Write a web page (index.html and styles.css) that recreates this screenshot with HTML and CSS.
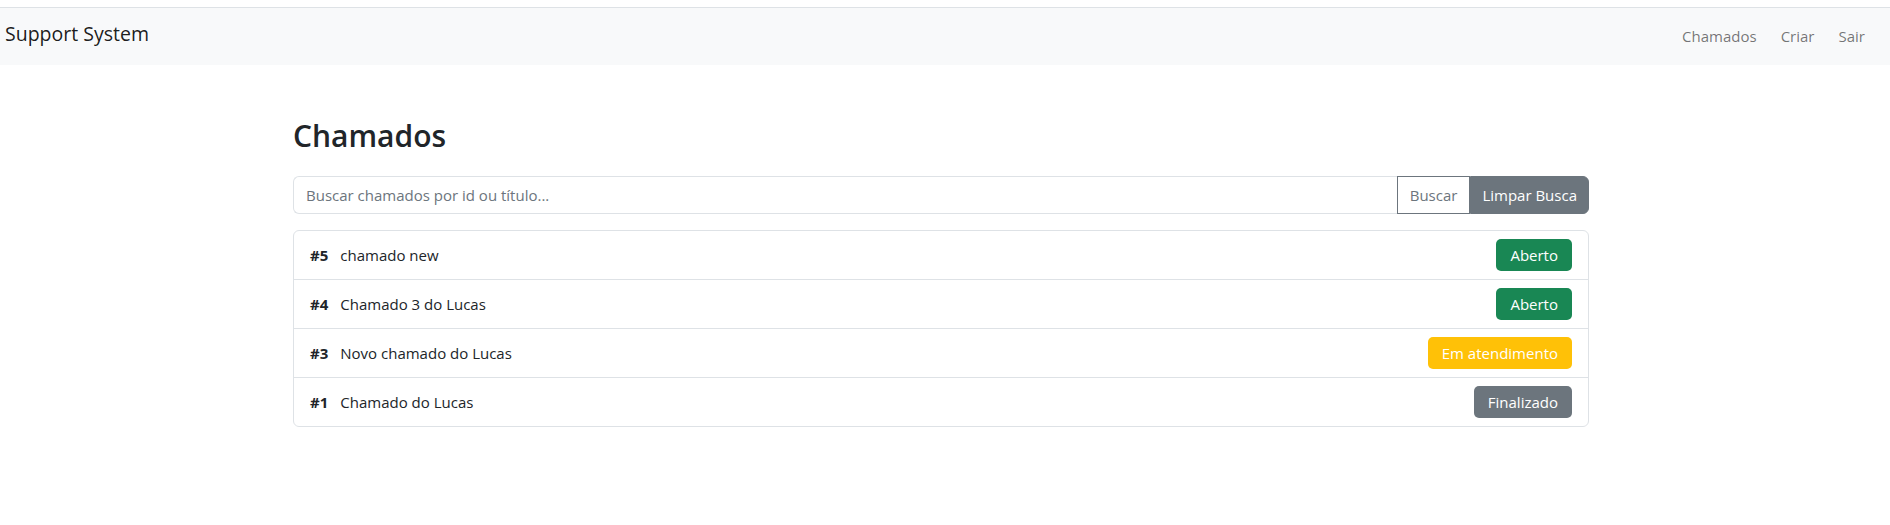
FILE: index.html
```html
<!DOCTYPE html>
<html lang="pt-BR">
<head>
<meta charset="utf-8">
<title>Support System</title>
<link rel="stylesheet" href="styles.css">
</head>
<body>
<nav class="navbar">
  <a class="brand" href="#">Support System</a>
  <ul class="nav">
    <li><a class="nav-link" href="#">Chamados</a></li>
    <li><a class="nav-link" href="#">Criar</a></li>
    <li><a class="nav-link" href="#">Sair</a></li>
  </ul>
</nav>
<main class="container">
  <h2 class="title">Chamados</h2>
  <form class="search">
    <input class="search-input" type="text" placeholder="Buscar chamados por id ou título...">
    <button class="btn btn-outline" type="button">Buscar</button>
    <button class="btn btn-secondary" type="button">Limpar Busca</button>
  </form>
  <ul class="list">
    <li class="item"><span class="item-id">#5</span><span class="item-title">chamado new</span><span class="badge badge-success">Aberto</span></li>
    <li class="item"><span class="item-id">#4</span><span class="item-title">Chamado 3 do Lucas</span><span class="badge badge-success">Aberto</span></li>
    <li class="item"><span class="item-id">#3</span><span class="item-title">Novo chamado do Lucas</span><span class="badge badge-warning">Em atendimento</span></li>
    <li class="item"><span class="item-id">#1</span><span class="item-title">Chamado do Lucas</span><span class="badge badge-secondary">Finalizado</span></li>
  </ul>
</main>
</body>
</html>
```
FILE: styles.css
```css
* { box-sizing: border-box; }
html, body {
  margin: 0;
  padding: 0;
  background: #fff;
  color: #212529;
  font-family: "Open Sans", "Noto Sans", sans-serif;
  font-size: 15px;
  line-height: 1.5;
}
body { padding-top: 7px; }
.navbar {
  display: flex;
  align-items: center;
  justify-content: space-between;
  height: 58px;
  border-top: 1px solid #dee2e6;
  background: #f8f9fa;
  padding: 0 13px 0 5px;
}
.brand {
  color: rgba(0,0,0,.9);
  text-decoration: none;
  font-size: 19.5px;
  font-weight: 500;
  margin-top: -6px;
}
.nav {
  display: flex;
  list-style: none;
  margin: 0;
  padding: 0;
}
.nav-link {
  display: block;
  padding: 8px 12px;
  color: rgba(0,0,0,.55);
  text-decoration: none;
}
.container {
  width: 1296px;
  margin: 0 0 0 calc(50% - 652px);
  padding-top: 53px;
}
.title {
  margin: 0 0 22px;
  font-size: 30px;
  font-weight: 600;
  line-height: 1.2;
}
.search {
  display: flex;
  margin: 0 0 16px;
  height: 38px;
}
.search-input {
  flex: 1;
  min-width: 0;
  border: 1px solid #dee2e6;
  border-right: 0;
  border-radius: 6px 0 0 6px;
  padding: 6px 12px;
  font: inherit;
  color: #212529;
  outline: none;
}
.search-input::placeholder { color: #6c757d; opacity: 1; }
.btn {
  font: inherit;
  padding: 6px 11px;
  border: 1px solid #6c757d;
  cursor: pointer;
}
.btn-outline {
  background: #fff;
  color: #6c757d;
  border-radius: 0;
  padding: 6px 12px;
}
.btn-secondary {
  background: #6c757d;
  color: #fff;
  border-radius: 0 6px 6px 0;
}
.list {
  list-style: none;
  margin: 0;
  padding: 0;
  border: 1px solid #dee2e6;
  border-radius: 6px;
}
.item {
  display: flex;
  align-items: center;
  padding: 8px 16px;
  min-height: 48px;
  border-top: 1px solid #dee2e6;
}
.item:first-child { border-top: 0; }
.item-id {
  font-weight: 700;
  margin-right: 12px;
}
.item-title { flex: 1; }
.badge {
  display: inline-block;
  padding: 5px 14px;
  border-radius: 5px;
  color: #fff;
  line-height: 22px;
}
.badge-success { background: #198754; }
.badge-warning { background: #ffc107; }
.badge-secondary { background: #6c757d; }
```
